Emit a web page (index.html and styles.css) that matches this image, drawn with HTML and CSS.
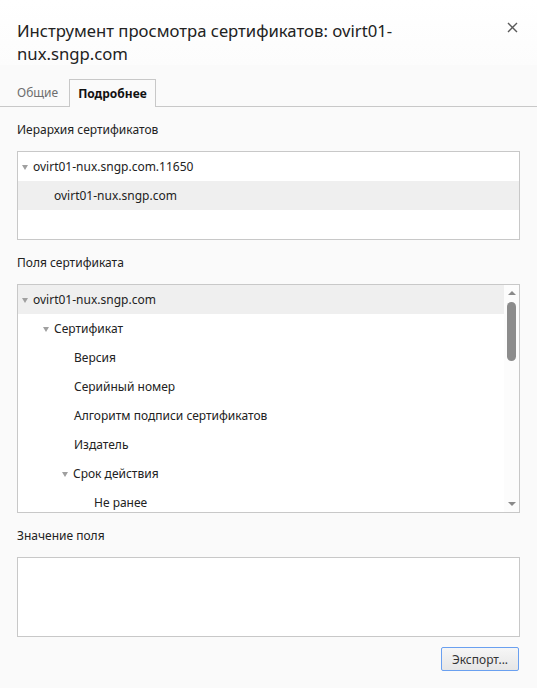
FILE: index.html
```html
<!DOCTYPE html>
<html lang="ru">
<head>
    <meta charset="UTF-8">
    <title>Инструмент просмотра сертификатов</title>
    <link rel="stylesheet" href="styles.css">
</head>
<body>

    <div class="header">
        <h1 class="title">Инструмент просмотра сертификатов: ovirt01-nux.sngp.com</h1>
        <button class="close-btn" aria-label="Закрыть">
            <svg width="11" height="11" viewBox="0 0 11 11">
                <path d="M1 1 L10 10 M10 1 L1 10" stroke="#5a5a5a" stroke-width="1.4" fill="none"/>
            </svg>
        </button>
    </div>

    <!-- Tabs -->
    <div class="tabs">
        <div class="tab">Общие</div>
        <div class="tab active">Подробнее</div>
    </div>

    <div class="content">
        <div class="label">Иерархия сертификатов</div>
        <div class="box hierarchy">
            <div class="row"><span class="arrow"></span>ovirt01-nux.sngp.com.11650</div>
            <div class="row selected lvl1">ovirt01-nux.sngp.com</div>
        </div>

        <div class="label">Поля сертификата</div>
        <div class="box fields">
            <div class="tree">
                <div class="row selected"><span class="arrow"></span>ovirt01-nux.sngp.com</div>
                <div class="row lvl1"><span class="arrow"></span>Сертификат</div>
                <div class="row lvl2 leaf">Версия</div>
                <div class="row lvl2 leaf">Серийный номер</div>
                <div class="row lvl2 leaf">Алгоритм подписи сертификатов</div>
                <div class="row lvl2 leaf">Издатель</div>
                <div class="row lvl2"><span class="arrow"></span>Срок действия</div>
                <div class="row lvl3 leaf">Не ранее</div>
            </div>
            <div class="scrollbar">
                <span class="sb-up"></span>
                <span class="sb-thumb"></span>
                <span class="sb-down"></span>
            </div>
        </div>

        <div class="label">Значение поля</div>
        <div class="box value"></div>

        <div class="actions">
            <button class="export-btn">Экспорт...</button>
        </div>
    </div>

</body>
</html>
```

FILE: styles.css
```css
body {
    margin: 0;
    background: #fafafa;
    font-family: "Noto Sans", "Open Sans", sans-serif;
    font-size: 12px;
    color: #222;
}
.header {
    display: flex;
    align-items: flex-start;
    padding: 19px 17px 0 17px;
    background: linear-gradient(#ffffff, #fcfcfc);
}
.title {
    flex: 1;
    margin: 0;
    padding-right: 30px;
    font-size: 16.7px;
    font-weight: normal;
    line-height: 23px;
    color: #222;
}
.close-btn {
    border: none;
    background: none;
    padding: 0;
    margin-top: 3px;
    margin-right: 2px;
    width: 11px;
    height: 11px;
    cursor: pointer;
}
.close-btn svg {
    display: block;
}
.tabs {
    display: flex;
    margin-top: 14px;
    padding-left: 12px;
    border-bottom: 1px solid #c8c8c8;
}
.tab {
    height: 26px;
    line-height: 27px;
    padding: 0 11px 0 5px;
    color: #6e6e6e;
}
.active {
    margin-bottom: -1px;
    padding: 0 8px 0 8px;
    border: 1px solid #c8c8c8;
    border-bottom: none;
    background: #fafafa;
    height: 27px;
    color: #111;
    font-weight: bold;
}
.content {
    padding: 0 17px;
}
.label {
    margin-top: 14px;
    line-height: 17px;
    height: 17px;
}
.box {
    margin-top: 13px;
    border: 1px solid #c8c8c8;
    background: #fff;
}
.hierarchy {
    height: 87px;
}
.row {
    display: flex;
    align-items: center;
    height: 29px;
    padding-left: 16px;
    white-space: nowrap;
}
.row.selected {
    background: #efefef;
}
.arrow {
    width: 0;
    height: 0;
    margin-left: -12px;
    margin-right: 5px;
    margin-top: 1px;
    border-left: 3.5px solid transparent;
    border-right: 3.5px solid transparent;
    border-top: 5px solid #a0a0a0;
}
.lvl1 { padding-left: 37px; }
.hierarchy .lvl1 { padding-left: 36px; }
.lvl2 { padding-left: 56px; }
.lvl3 { padding-left: 76px; }
.fields {
    display: flex;
    height: 227px;
    overflow: hidden;
}
.tree {
    flex: 1;
}
.scrollbar {
    position: relative;
    width: 15px;
    background: #fcfcfc;
}
.sb-up,
.sb-down {
    position: absolute;
    left: 4px;
    width: 0;
    height: 0;
    border-left: 4px solid transparent;
    border-right: 4px solid transparent;
}
.sb-up {
    top: 6px;
    border-bottom: 4px solid #8a8a8a;
}
.sb-down {
    bottom: 6px;
    border-top: 4px solid #8a8a8a;
}
.sb-thumb {
    position: absolute;
    left: 3px;
    top: 17px;
    width: 9px;
    height: 59px;
    border-radius: 5px;
    background: #8c8c8c;
}
.value {
    height: 78px;
}
.actions {
    display: flex;
    justify-content: flex-end;
    margin-top: 10px;
    padding-right: 1px;
}
.export-btn {
    width: 78px;
    height: 24px;
    padding: 0;
    border: 1px solid #6aa0f0;
    border-radius: 2px;
    background: linear-gradient(#f6f6f6, #e6e6e6);
    font-family: "Noto Sans", "Open Sans", sans-serif;
    font-size: 12px;
    color: #333;
    cursor: pointer;
}
```
